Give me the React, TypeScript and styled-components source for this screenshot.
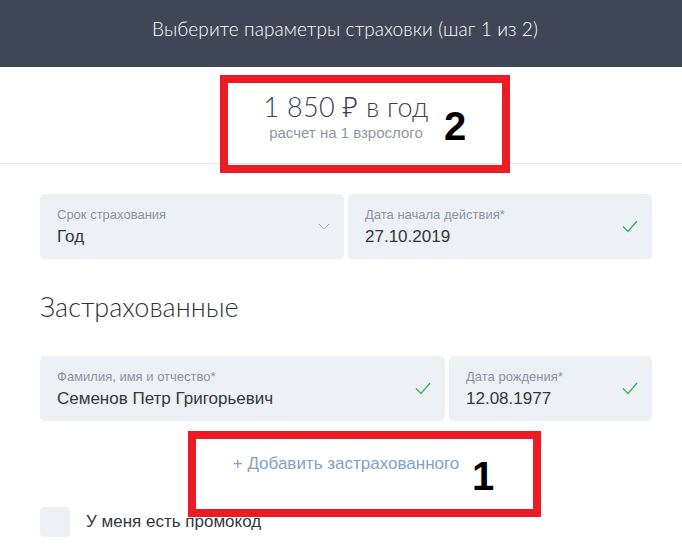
import React from "react";
import styled, { createGlobalStyle } from "styled-components";

const Global = createGlobalStyle`
  html, body { margin: 0; padding: 0; background: #fff; }
  body { font-family: "Liberation Sans", Arial, sans-serif; }
  * { box-sizing: border-box; }
`;

const Page = styled.div`
  position: relative;
  width: 682px;
  height: 547px;
  overflow: hidden;
  background: #fff;
`;

const Header = styled.header`
  height: 67px;
  background: #3f4757;
  display: flex;
  align-items: center;
  justify-content: center;
  color: #fff;
  font-family: Lato, "Open Sans", sans-serif;
  font-weight: 300;
  font-size: 19px;
  letter-spacing: 0.1px;
  padding: 0 0 10px 8px;
`;

const PriceBlock = styled.section`
  height: 97px;
  border-bottom: 1px solid #e4e6ea;
  display: flex;
  flex-direction: column;
  align-items: center;
  padding: 24px 0 0 10px;
`;

const Price = styled.div`
  font-family: Lato, "Open Sans", sans-serif;
  font-weight: 300;
  font-size: 27px;
  line-height: 32px;
  color: #3b4250;
  letter-spacing: 0.3px;
`;

const Ruble = styled.span`
  font-family: "Open Sans", "Noto Sans", sans-serif;
  font-weight: 300;
`;

const PriceNote = styled.div`
  font-size: 15px;
  line-height: 18px;
  color: #8f96a1;
  margin-top: 1px;
`;

const Form = styled.div`
  padding: 30px 30px 0 40px;
  display: flex;
  flex-direction: column;
`;

const Row = styled.div<{ $cols: string }>`
  display: grid;
  grid-template-columns: ${(p) => p.$cols};
  gap: 4px;
`;

const Field = styled.div`
  height: 65px;
  background: #edf0f4;
  border-radius: 5px;
  padding: 0 14px 0 17px;
  display: flex;
  align-items: center;
  justify-content: space-between;
`;

const FieldText = styled.div`
  display: flex;
  flex-direction: column;
  padding-top: 2px;
`;

const Label = styled.div`
  font-size: 13px;
  line-height: 16px;
  color: #8d949f;
`;

const Value = styled.div`
  font-size: 17px;
  line-height: 22px;
  color: #34373d;
  margin-top: 3px;
`;

const Heading = styled.h2`
  margin: 30px 0 31px;
  font-family: Lato, "Open Sans", sans-serif;
  font-weight: 300;
  font-size: 27px;
  line-height: 36px;
  color: #2f333a;
`;

const AddLink = styled.div`
  margin-top: 33px;
  text-align: center;
  font-size: 17px;
  line-height: 20px;
  color: #7fa3c9;
`;

const PromoRow = styled.label`
  margin-top: 33px;
  display: flex;
  align-items: center;
  gap: 16px;
  font-size: 17px;
  color: #34373d;
`;

const CheckBox = styled.span`
  width: 30px;
  height: 30px;
  border-radius: 4px;
  background: #edf0f4;
`;

const Annotation = styled.div<{ $x: number; $y: number; $w: number; $h: number }>`
  position: absolute;
  left: ${(p) => p.$x}px;
  top: ${(p) => p.$y}px;
  width: ${(p) => p.$w}px;
  height: ${(p) => p.$h}px;
  border: 8px solid #ed1c24;
`;

const Mark = styled.div<{ $x: number; $y: number }>`
  position: absolute;
  left: ${(p) => p.$x}px;
  top: ${(p) => p.$y}px;
  font-family: "Liberation Sans", Arial, sans-serif;
  font-weight: 700;
  font-size: 40px;
  line-height: 40px;
  color: #000;
`;

const Chevron = () => (
  <svg width="12" height="7" viewBox="0 0 12 7" fill="none">
    <path d="M1 1l5 5 5-5" stroke="#a3a9b2" strokeWidth="1" />
  </svg>
);

const Check = () => (
  <svg width="16" height="13" viewBox="0 0 16 13" fill="none">
    <path d="M1 6.5l5 5L15 1" stroke="#3bb266" strokeWidth="1.4" />
  </svg>
);

export default function App() {
  return (
    <Page>
      <Global />
      <Header>Выберите параметры страховки (шаг 1 из 2)</Header>
      <PriceBlock>
        <Price>
          1 850 <Ruble>₽</Ruble> в год
        </Price>
        <PriceNote>расчет на 1 взрослого</PriceNote>
      </PriceBlock>
      <Form>
        <Row $cols="1fr 1fr">
          <Field>
            <FieldText>
              <Label>Срок страхования</Label>
              <Value>Год</Value>
            </FieldText>
            <Chevron />
          </Field>
          <Field>
            <FieldText>
              <Label>Дата начала действия*</Label>
              <Value>27.10.2019</Value>
            </FieldText>
            <Check />
          </Field>
        </Row>
        <Heading>Застрахованные</Heading>
        <Row $cols="405px 1fr">
          <Field>
            <FieldText>
              <Label>Фамилия, имя и отчество*</Label>
              <Value>Семенов Петр Григорьевич</Value>
            </FieldText>
            <Check />
          </Field>
          <Field>
            <FieldText>
              <Label>Дата рождения*</Label>
              <Value>12.08.1977</Value>
            </FieldText>
            <Check />
          </Field>
        </Row>
        <AddLink>+ Добавить застрахованного</AddLink>
        <PromoRow>
          <CheckBox />
          У меня есть промокод
        </PromoRow>
      </Form>
      <Annotation $x={220} $y={75} $w={290} $h={98} />
      <Mark $x={444} $y={106}>2</Mark>
      <Annotation $x={188} $y={431} $w={353} $h={86} />
      <Mark $x={472} $y={456}>1</Mark>
    </Page>
  );
}
